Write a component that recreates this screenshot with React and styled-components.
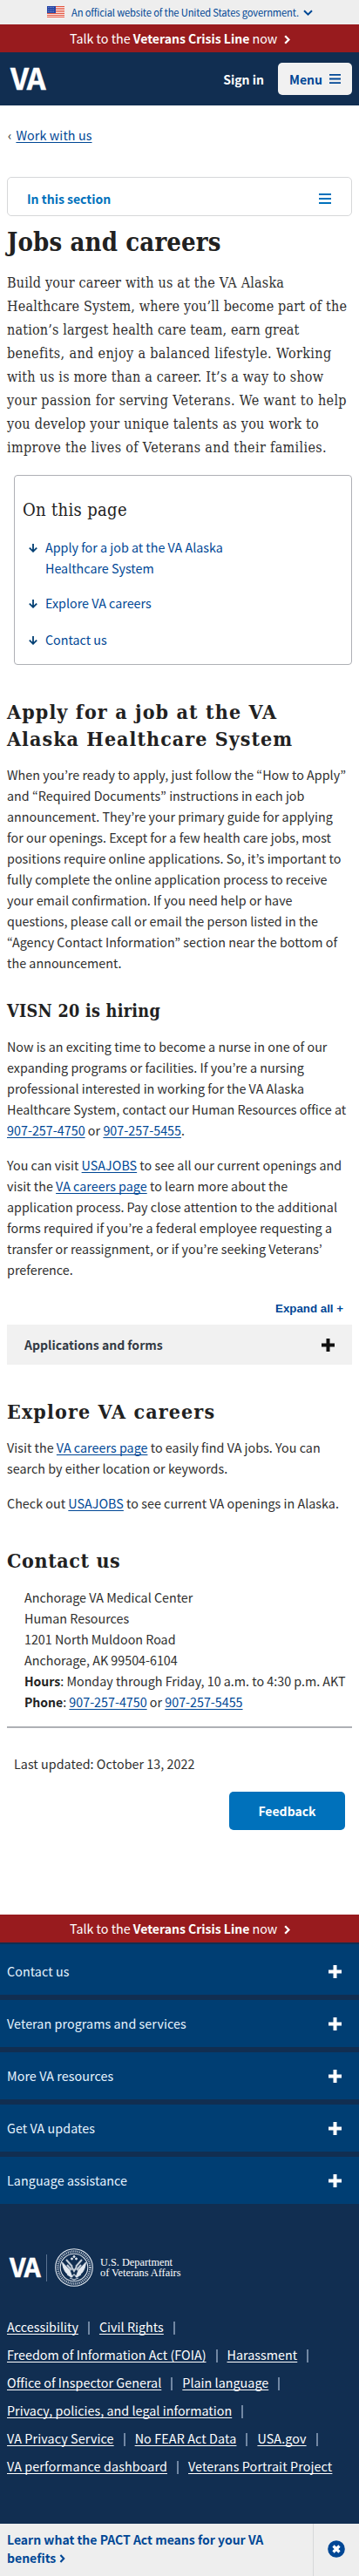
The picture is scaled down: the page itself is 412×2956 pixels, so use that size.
import React from "react";
import styled, { createGlobalStyle, css } from "styled-components";

const sans = '"Noto Sans CJK JP", "Noto Sans", sans-serif';
const slab = '"DejaVu Serif Condensed", "DejaVu Serif", serif';
const navy = "#112e51";
const link = "#004795";

const Global = createGlobalStyle`
  * { box-sizing: border-box; }
  body {
    margin: 0;
    background: #fff;
    color: #2e2e2e;
    font-family: ${sans};
    font-size: 14.3px;
    line-height: 24px;
  }
  h1, h2, h3, p, ul, address { margin: 0; padding: 0; }
  ul { list-style: none; }
  button { font: inherit; border: 0; padding: 0; background: none; }
  b { font-size: 14px; }
  svg { display: block; flex: none; }
`;

const strong = css`
  font-size: 14px;
  font-weight: 700;
`;

const Page = styled.div`
  width: 412px;
  height: 2956px;
  overflow: hidden;
  white-space: nowrap;
`;

const GovBanner = styled.div`
  display: flex;
  height: 28px;
  padding-left: 54px;
  align-items: center;
  background: #eee;
  color: ${link};
  font-size: 11.2px;
  letter-spacing: -0.15px;
  svg + span { width: 261px; margin: 0 5px 0 8px; }
`;

const CrisisBar = styled.a`
  display: flex;
  height: 32px;
  padding-left: 80px;
  align-items: center;
  background: #981b1e;
  color: #fff;
  svg { margin: 3px 0 0 8px; }
`;

const Header = styled.header`
  display: flex;
  height: 61px;
  padding: 0 8px 0 12px;
  align-items: center;
  background: ${navy};
  color: #fff;
`;

const Wordmark = styled.span`
  width: ${(p) => p.$width}px;
  margin-top: -4px;
  font-size: ${(p) => p.$size}px;
  font-weight: 700;
  line-height: 1;
  letter-spacing: ${(p) => p.$size * -0.05}px;
  -webkit-text-stroke: 0.5px #fff;
  color: #fff;
`;

const SignIn = styled.button`
  ${strong}
  margin-left: auto;
  margin-right: 16px;
  color: #fff;
`;

const MenuButton = styled.button`
  ${strong}
  display: flex;
  width: 85px;
  height: 37px;
  padding: 0 13px;
  align-items: center;
  justify-content: space-between;
  border-radius: 5px;
  background: #f1f1f1;
  color: ${link};
`;

const Breadcrumb = styled.nav`
  display: flex;
  gap: 5px;
  height: 82px;
  padding: 22px 0 0 9px;
  letter-spacing: 0.1px;
`;

const A = styled.a`
  color: ${link};
  text-decoration: underline;
  text-underline-offset: 2px;
  text-decoration-thickness: 1px;
  text-decoration-skip-ink: none;
`;

const SectionNav = styled.button`
  ${strong}
  display: flex;
  width: 396px;
  height: 45px;
  margin-left: 8px;
  padding: 4px 23px 0 22px;
  align-items: center;
  justify-content: space-between;
  border: 1px solid #d6d7d9;
  border-radius: 5px;
  color: #0071bc;
`;

const Content = styled.main`
  display: flex;
  flex-direction: column;
  height: 1949px;
  padding: 0 8px;
`;

const slabText = css`
  font-family: ${slab};
  font-stretch: condensed;
`;

const Title = styled.h1`
  ${slabText}
  margin-top: 12px;
  height: 51px;
  color: #212121;
  font-size: 29px;
  line-height: 36px;
  letter-spacing: 0.15px;
`;

const Intro = styled.p`
  ${slabText}
  font-size: 16px;
  line-height: 27px;
`;

const Tracked = styled.span`
  display: block;
  letter-spacing: ${(p) => p.$track}px;
`;

const Heading = styled.h2`
  ${slabText}
  margin-top: 38px;
  color: #212121;
  font-size: 23px;
  line-height: 31px;
`;

const SubHeading = styled.h3`
  ${slabText}
  margin-top: 31px;
  color: #212121;
  font-size: 19.6px;
  line-height: 26px;
  letter-spacing: 0.3px;
`;

const Para = styled.p`
  margin-top: ${(p) => p.$top || 16}px;
  letter-spacing: 0.03px;
`;

const Toc = styled.nav`
  width: 388px;
  height: 218px;
  margin: 18px 0 0 8px;
  padding: 26px 9px 0;
  border: 1px solid #aeb0b5;
  border-radius: 4px;
`;

const TocTitle = styled.h2`
  ${slabText}
  color: #212121;
  font-size: 20px;
  font-weight: 400;
  line-height: 26px;
  letter-spacing: 0.33px;
`;

const TocItem = styled.li`
  display: flex;
  gap: 9px;
  margin: 16px 0 0 7px;
  color: ${link};
  &:first-child { margin-top: 18px; }
  & + & + & { margin-top: 18px; }
  svg { margin-top: 8px; }
`;

const ExpandAll = styled.button`
  align-self: flex-end;
  margin: 18px 10px 0 0;
  padding-bottom: 3px;
  height: 33px;
  color: ${link};
  font: 700 13.3px/24px "Liberation Sans", sans-serif;
`;

const Accordion = styled.button`
  ${strong}
  display: flex;
  height: 46px;
  padding: 0 20px;
  align-items: center;
  justify-content: space-between;
  background: #f1f1f1;
  color: #323a45;
`;

const Address = styled.address`
  margin: 15px 0 16px 20px;
  font-style: normal;
  b { color: #212121; }
`;

const Rule = styled.div`
  height: 2px;
  background: #aeb0b5;
`;

const Updated = styled.p`
  margin: 29px 0 0 8px;
  letter-spacing: 0.05px;
`;

const Feedback = styled.button`
  ${strong}
  align-self: flex-end;
  width: 133px;
  height: 44px;
  margin: 20px 8px 0 0;
  border-radius: 5px;
  background: #0071bb;
  color: #fff;
`;

const Footer = styled.footer`
  height: 667px;
  padding-top: 2px;
  background: ${navy};
  color: #fff;
`;

const FooterPanel = styled.button`
  display: flex;
  width: 100%;
  height: 54px;
  margin-bottom: 6px;
  padding: 0 20px 0 8px;
  align-items: center;
  justify-content: space-between;
  background: #003e73;
  color: #e7f4ff;
  letter-spacing: 0.07px;
  &:first-child { height: 58px; padding-top: 4px; }
`;

const FooterLogo = styled.div`
  display: flex;
  height: 44px;
  margin: 51px 0 0 11px;
  align-items: center;
`;

const LogoDivider = styled.span`
  width: 1px;
  height: 31px;
  margin: 0 9px 0 8px;
  background: #5b7391;
`;

const Dept = styled.span`
  margin-left: 8px;
  font: 12.3px/12px "Liberation Serif", serif;
  color: #fff;
`;

const FooterLinks = styled.div`
  padding: 30px 0 0 8px;
`;

const LinkRow = styled.div`
  display: flex;
  height: 32px;
  align-items: center;
  letter-spacing: ${(p) => p.$track}px;
  a { color: #fff; }
`;

const Bar = styled.i`
  width: 2px;
  height: 15px;
  margin: 2px 11px 0;
  background: #7187a3;
`;

const Promo = styled.div`
  display: flex;
  height: 60px;
  background: #eee;
  color: ${link};
  font-size: 14px;
  font-weight: 700;
  line-height: 21px;
`;

const PromoText = styled.div`
  width: 359px;
  padding: 8px 0 0 8px;
  svg { display: inline-block; margin-left: 1px; }
`;

const PromoClose = styled.button`
  display: flex;
  flex: 1;
  padding-bottom: 3px;
  align-items: center;
  justify-content: center;
  border-left: 1px solid #d6d7d9;
`;

const Flag = () => (
  <svg width="20" height="14" viewBox="0 0 20 14">
    <rect width="20" height="14" fill="#fff" />
    {[0, 2, 4, 6, 8, 10, 12].map((y) => (
      <rect key={y} y={y} width="20" height="1.1" fill="#e0543e" />
    ))}
    <rect width="10" height="8" fill="#2746a6" />
    {[1.5, 4, 6.5].map((y) =>
      [1.5, 4, 6.5].map((x) => <circle key={`${x}${y}`} cx={x + 0.5} cy={y} r="0.5" fill="#b9c6ee" />)
    )}
  </svg>
);

const ChevronRight = ({ width = 7, height = 11, color = "#fff" }) => (
  <svg width={width} height={height} viewBox="0 0 7 11">
    <path d="M1.2 1.2 5.4 5.5 1.2 9.8" fill="none" stroke={color} strokeWidth="2.3" />
  </svg>
);

const ChevronDown = () => (
  <svg width="11" height="7" viewBox="0 0 11 7">
    <path d="M1 1.2 5.5 5.6 10 1.2" fill="none" stroke={link} strokeWidth="2" />
  </svg>
);

const Bars = ({ width, height, color }) => (
  <svg width={width} height={height} viewBox="0 0 14 12" preserveAspectRatio="none">
    <path d="M0 1H14M0 6H14M0 11H14" stroke={color} strokeWidth="2" />
  </svg>
);

const ArrowDown = () => (
  <svg width="10" height="10" viewBox="0 0 10 10">
    <path d="M5 0V9M0.8 4.6 5 8.8 9.2 4.6" fill="none" stroke="#003e73" strokeWidth="1.8" />
  </svg>
);

const Plus = ({ color }) => (
  <svg width="15" height="15" viewBox="0 0 15 15">
    <path d="M7.5 0V15M0 7.5H15" stroke={color} strokeWidth="4" />
  </svg>
);

const Seal = () => (
  <svg width="44" height="44" viewBox="0 0 44 44" fill="none" stroke="#e4eaf1">
    <circle cx="22" cy="22" r="21.3" strokeWidth="1.1" />
    <circle cx="22" cy="22" r="18.5" strokeWidth="2.6" strokeDasharray="1.2 1" opacity="0.75" />
    <circle cx="22" cy="22" r="15.8" strokeWidth="1.1" />
    <path d="M8.5 16C9 25 14 31 20 33L17 25ZM35.5 16C35 25 30 31 24 33L27 25Z" fill="#e4eaf1" strokeWidth="0.8" />
    <path d="M13 13 20 21M31 13 24 21M14 19 19 25M30 19 25 25M19 21 22 26 25 21" strokeWidth="2" opacity="0.85" />
    <circle cx="19.5" cy="12" r="1" fill="#e4eaf1" />
    <circle cx="24.5" cy="12" r="1" fill="#e4eaf1" />
    <circle cx="22" cy="9.5" r="1" fill="#e4eaf1" />
    <path d="M14 30 19 33 22 30 25 33 30 30M17 34 22 36 27 34" strokeWidth="1.3" opacity="0.8" />
  </svg>
);

const CloseCircle = () => (
  <svg width="20" height="20" viewBox="0 0 20 20">
    <circle cx="10" cy="10" r="9.8" fill={link} />
    <path d="M6.5 6.5 13.5 13.5M13.5 6.5 6.5 13.5" stroke="#fff" strokeWidth="3.2" />
  </svg>
);

const Crisis = () => (
  <CrisisBar>
    <span>Talk to the <b>Veterans Crisis Line</b> now</span>
    <ChevronRight />
  </CrisisBar>
);

const introLines = [
  ["Build your career with us at the VA Alaska", 0.2],
  ["Healthcare System, where you’ll become part of the", 0.18],
  ["nation’s largest health care team, earn great", 0.17],
  ["benefits, and enjoy a balanced lifestyle. Working", 0.37],
  ["with us is more than a career. It’s a way to show", 0.2],
  ["your passion for serving Veterans. We want to help", 0.36],
  ["you develop your unique talents as you work to", 0.27],
  ["improve the lives of Veterans and their families.", 0.34],
];

const panels = ["Contact us", "Veteran programs and services", "More VA resources", "Get VA updates", "Language assistance"];

const footerLinks = [
  ["Accessibility", "Civil Rights"],
  ["Freedom of Information Act (FOIA)", "Harassment"],
  ["Office of Inspector General", "Plain language"],
  ["Privacy, policies, and legal information"],
  ["VA Privacy Service", "No FEAR Act Data", "USA.gov"],
  ["VA performance dashboard", "Veterans Portrait Project"],
];

export default function App() {
  return (
    <Page>
      <Global />
      <GovBanner>
        <Flag />
        <span>An official website of the United States government.</span>
        <ChevronDown />
      </GovBanner>
      <Crisis />
      <Header>
        <Wordmark $size={34} $width={41}>VA</Wordmark>
        <SignIn>Sign in</SignIn>
        <MenuButton>
          Menu
          <Bars width={13} height={11} color={link} />
        </MenuButton>
      </Header>
      <Breadcrumb>
        <span>‹</span>
        <A>Work with us</A>
      </Breadcrumb>
      <SectionNav>
        In this section
        <Bars width={14} height={12} color="#0071bc" />
      </SectionNav>
      <Content>
        <Title>Jobs and careers</Title>
        <Intro>
          {introLines.map(([text, track]) => (
            <Tracked key={text} $track={track}>{text}</Tracked>
          ))}
        </Intro>
        <Toc>
          <TocTitle>On this page</TocTitle>
          <ul>
            <TocItem><ArrowDown /><span>Apply for a job at the VA Alaska<br />Healthcare System</span></TocItem>
            <TocItem><ArrowDown /><span>Explore VA careers</span></TocItem>
            <TocItem><ArrowDown /><span>Contact us</span></TocItem>
          </ul>
        </Toc>
        <Heading>
          <Tracked $track={1.13}>Apply for a job at the VA</Tracked>
          <Tracked $track={1.05}>Alaska Healthcare System</Tracked>
        </Heading>
        <Para $top={14}>
          When you’re ready to apply, just follow the “How to Apply”<br />
          and “Required Documents” instructions in each job<br />
          announcement. They’re your primary guide for applying<br />
          for our openings. Except for a few health care jobs, most<br />
          positions require online applications. So, it’s important to<br />
          fully complete the online application process to receive<br />
          your email confirmation. If you need help or have<br />
          questions, please call or email the person listed in the<br />
          “Agency Contact Information” section near the bottom of<br />
          the announcement.
        </Para>
        <SubHeading>VISN 20 is hiring</SubHeading>
        <Para $top={15}>
          Now is an exciting time to become a nurse in one of our<br />
          expanding programs or facilities. If you’re a nursing<br />
          professional interested in working for the VA Alaska<br />
          Healthcare System, contact our Human Resources office at<br />
          <A>907-257-4750</A> or <A>907-257-5455</A>.
        </Para>
        <Para>
          You can visit <A>USAJOBS</A> to see all our current openings and<br />
          visit the <A>VA careers page</A> to learn more about the<br />
          application process. Pay close attention to the additional<br />
          forms required if you’re a federal employee requesting a<br />
          transfer or reassignment, or if you’re seeking Veterans’<br />
          preference.
        </Para>
        <ExpandAll>Expand all +</ExpandAll>
        <Accordion>
          Applications and forms
          <Plus color="#111" />
        </Accordion>
        <Heading><Tracked $track={1.13}>Explore VA careers</Tracked></Heading>
        <Para $top={14}>
          Visit the <A>VA careers page</A> to easily find VA jobs. You can<br />
          search by either location or keywords.
        </Para>
        <Para>
          Check out <A>USAJOBS</A> to see current VA openings in Alaska.
        </Para>
        <Heading><Tracked $track={0.6}>Contact us</Tracked></Heading>
        <Address>
          Anchorage VA Medical Center<br />
          Human Resources<br />
          1201 North Muldoon Road<br />
          Anchorage, AK 99504-6104<br />
          <b>Hours</b>: Monday through Friday, 10 a.m. to 4:30 p.m. AKT<br />
          <b>Phone</b>: <A>907-257-4750</A> or <A>907-257-5455</A>
        </Address>
        <Rule />
        <Updated>Last updated: October 13, 2022</Updated>
        <Feedback>Feedback</Feedback>
      </Content>
      <Crisis />
      <Footer>
        {panels.map((p) => (
          <FooterPanel key={p}>
            {p}
            <Plus color="#fff" />
          </FooterPanel>
        ))}
        <FooterLogo>
          <Wordmark $size={30} $width={34}>VA</Wordmark>
          <LogoDivider />
          <Seal />
          <Dept>U.S. Department<br />of Veterans Affairs</Dept>
        </FooterLogo>
        <FooterLinks>
          {footerLinks.map((row, r) => (
            <LinkRow key={r} $track={r > 3 ? 0.13 : 0.04}>
              {row.map((t, i) => (
                <React.Fragment key={t}>
                  <A>{t}</A>
                  {!(r === footerLinks.length - 1 && i === row.length - 1) && <Bar />}
                </React.Fragment>
              ))}
            </LinkRow>
          ))}
        </FooterLinks>
      </Footer>
      <Promo>
        <PromoText>
          Learn what the PACT Act means for your VA<br />
          benefits <ChevronRight width={7} height={10} color={link} />
        </PromoText>
        <PromoClose><CloseCircle /></PromoClose>
      </Promo>
    </Page>
  );
}
